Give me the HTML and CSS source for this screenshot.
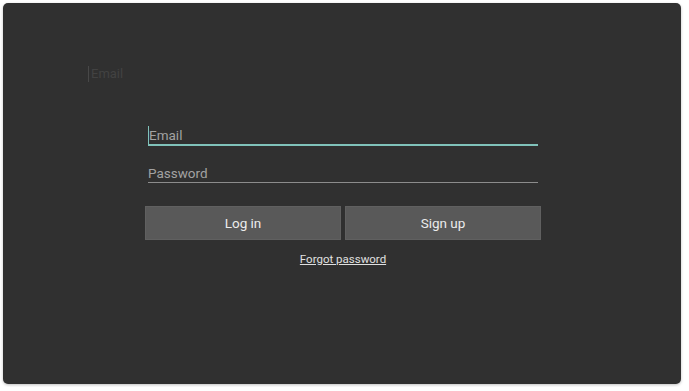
FILE: index.html
```
<!DOCTYPE html>
<html lang="en">
<head>
<meta charset="UTF-8" />
<title>Log in</title>
<link rel="stylesheet" href="styles.css">
</head>
<body>
<div class="screen">
<div class="ghost-label">Email</div>

<form class="login-form">
<div class="field active"><span class="caret"></span><span>Email</span></div>
<div class="field"><span>Password</span></div>
<div class="buttons">
<button type="button">Log in</button>
<button type="button">Sign up</button>
</div>
<p class="forgot"><a href="#">Forgot password</a></p>
</form>
</div>
</body>
</html>
```
FILE: styles.css
```
* {
box-sizing: border-box;
margin: 0;
padding: 0;
font-family: Roboto, 'Noto Sans', sans-serif;
}

body {
background: #fff;
}

.screen {
position: relative;
margin: 3px;
width: 678px;
height: 381px;
padding-top: 123px;
background: #303030;
border-radius: 5px;
box-shadow: 0 1px 3px rgba(0,0,0,0.25);
}

.ghost-label {
position: absolute;
left: 85px;
top: 63px;
padding-left: 2px;
border-left: 1px solid #484848;
font-size: 13px;
line-height: 16px;
color: #424242;
}

.login-form {
width: 396px;
margin-left: 142px;
}

.field {
display: flex;
align-items: flex-end;
margin: 0 3px;
height: 18px;
border-bottom: 1px solid #8c8c8c;
font-size: 13.5px;
line-height: 18px;
color: #a2a2a2;
}

.field.active {
height: 20px;
border-bottom: 2px solid #80c2ba;
margin-bottom: 19px;
}

.caret {
width: 1px;
height: 18px;
background: #80c2ba;
}

.buttons {
display: flex;
gap: 4px;
margin-top: 23px;
}

.buttons button {
flex: 1;
height: 34px;
background: #595959;
border: 1px solid #606060;
color: #ececec;
font-size: 13.5px;
}

.forgot {
margin-top: 12px;
text-align: center;
font-size: 11.5px;
line-height: 15px;
}

.forgot a {
color: #e0e0e0;
}
```
